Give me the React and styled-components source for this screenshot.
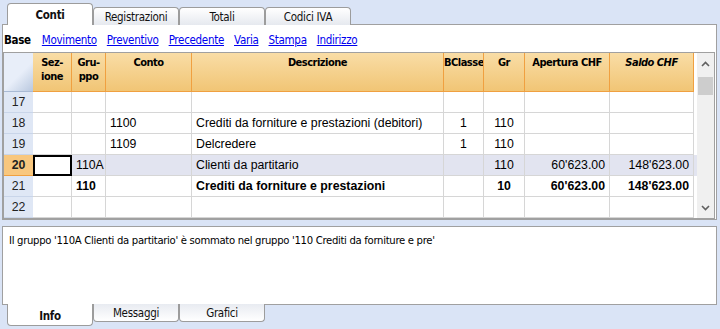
import React from 'react';
import styled, { createGlobalStyle } from 'styled-components';

const GlobalStyle = createGlobalStyle`
  html, body {
    margin: 0;
    padding: 0;
  }
  body {
    width: 720px;
    height: 329px;
    overflow: hidden;
    background: #dae4f6;
    font-family: "DejaVu Sans Condensed", "Liberation Sans", sans-serif;
    font-size: 11px;
    letter-spacing: -0.3px;
    color: #000;
  }
`;

const Window = styled.div`
  display: flex;
  flex-direction: column;
  width: 720px;
  height: 329px;
  & > * {
    flex-shrink: 0;
  }
`;

const TabStrip = styled.div`
  display: flex;
  align-items: ${props => props.bottom ? 'flex-start' : 'flex-end'};
  height: 24px;
  padding-left: 7px;
  position: relative;
  z-index: 2;
`;

const Tab = styled.div`
  box-sizing: border-box;
  width: 86px;
  height: ${props => props.active ? '22px' : '18px'};
  ${props => props.bottom ? 'margin-top: -1px;' : 'margin-bottom: -1px;'}
  border: 1px solid #9c9c9c;
  ${props => props.bottom ? 'border-top: none;' : 'border-bottom: none;'}
  border-radius: ${props => props.bottom ? '0 0 4px 4px' : '4px 4px 0 0'};
  background: ${props => props.active
    ? '#ffffff'
    : props.bottom
      ? 'linear-gradient(#e8ebf1, #ffffff)'
      : 'linear-gradient(#ffffff, #e6e9ef)'};
  display: flex;
  justify-content: center;
  align-items: ${props => props.bottom && props.active ? 'flex-end' : 'center'};
  padding-bottom: ${props => props.bottom && props.active ? '2px' : '0'};
  font-size: 11.5px;
  font-weight: ${props => props.active ? 'bold' : 'normal'};
  color: #111;
`;

const Panel = styled.div`
  box-sizing: border-box;
  margin: 0 3px 0 2px;
  border: 1px solid #a0a0a0;
  background: #ffffff;
  position: relative;
  z-index: 1;
`;

const MainPanel = styled(Panel)`
  height: 196px;
`;

const LinkBar = styled.div`
  display: flex;
  align-items: center;
  height: 27px;
  padding: 2px 0 0 1px;
  box-sizing: border-box;
  font-size: 11.5px;
  gap: 10px;
`;

const ViewLabel = styled.span`
  font-weight: bold;
  margin-right: 1px;
`;

const ViewLink = styled.a`
  color: #0000ee;
  text-decoration: underline;
  cursor: pointer;
`;

const Grid = styled.div`
  display: flex;
  height: 167px;
  box-sizing: border-box;
  border: 1px solid #a0a0a0;
  margin-right: 1px;
  overflow: hidden;
`;

const Table = styled.div`
  width: 693px;
  display: flex;
  flex-direction: column;
`;

const cols = '29px 39px 34px 86px 252px 40px 41px 85px 84px';

const HeaderRow = styled.div`
  display: grid;
  grid-template-columns: ${cols};
  height: 39px;
  flex-shrink: 0;
`;

const Corner = styled.div`
  background: linear-gradient(135deg, #e8eef9 55%, #b9c8df 100%);
  border-bottom: 1px solid #a9bad4;
`;

const HeaderCell = styled.div`
  box-sizing: border-box;
  background: linear-gradient(#f9dda6, #f1c575);
  border-right: 1px solid #f0a040;
  border-bottom: 1px solid #f0a040;
  padding-top: 3px;
  text-align: center;
  white-space: pre-line;
  overflow: hidden;
  font-size: 11px;
  letter-spacing: -0.5px;
  line-height: 14px;
  font-weight: bold;
  font-style: ${props => props.italic ? 'italic' : 'normal'};
`;

const Row = styled.div`
  display: grid;
  grid-template-columns: ${cols};
  height: 21px;
  flex-shrink: 0;
  background: ${props => props.selected ? '#e2e4f0' : '#ffffff'};
  font-family: "Liberation Sans", Arial, sans-serif;
  font-size: 12.3px;
  letter-spacing: 0;
  font-weight: ${props => props.bold ? 'bold' : 'normal'};
`;

const RowNumber = styled.div`
  box-sizing: border-box;
  background: ${props => props.selected ? '#f8c77f' : '#dfe7f5'};
  border-bottom: 1px solid ${props => props.selected ? '#f0a040' : '#c9d5e9'};
  display: flex;
  align-items: center;
  justify-content: center;
  font-weight: ${props => props.selected ? 'bold' : 'normal'};
  color: #222;
`;

const Cell = styled.div`
  box-sizing: border-box;
  border-right: 1px solid #d6d6d6;
  border-bottom: 1px solid #d6d6d6;
  display: flex;
  align-items: center;
  justify-content: ${props => props.align === 'right' ? 'flex-end' : props.align === 'center' ? 'center' : 'flex-start'};
  padding: 0 4px;
  white-space: nowrap;
  overflow: hidden;
  ${props => props.active && `
    outline: 2px solid #000;
    outline-offset: -2px;
    background: #ffffff;
  `}
`;

const ScrollBar = styled.div`
  width: 17px;
  background: #f0f0f0;
  display: flex;
  flex-direction: column;
  align-items: center;
`;

const ScrollButton = styled.div`
  height: 21px;
  width: 100%;
  display: flex;
  align-items: center;
  justify-content: center;
`;

const Thumb = styled.div`
  width: 15px;
  height: 18px;
  margin-top: 3px;
  background: #cdcdcd;
`;

const Spacer = styled.div`
  flex: 1;
`;

const InfoPanel = styled(Panel)`
  margin-top: 6px;
  height: 79px;
  padding: 7px 6px;
  font-size: 11.2px;
`;

const columns = [
  { key: 'sez', title: 'Sez-\nione' },
  { key: 'gruppo', title: 'Gru-\nppo' },
  { key: 'conto', title: 'Conto' },
  { key: 'desc', title: 'Descrizione' },
  { key: 'bclasse', title: 'BClasse', align: 'center' },
  { key: 'gr', title: 'Gr', align: 'center' },
  { key: 'apertura', title: 'Apertura CHF', align: 'right' },
  { key: 'saldo', title: 'Saldo CHF', align: 'right', italic: true },
];

const rows = [
  { n: 17 },
  { n: 18, conto: '1100', desc: 'Crediti da forniture e prestazioni (debitori)', bclasse: '1', gr: '110' },
  { n: 19, conto: '1109', desc: 'Delcredere', bclasse: '1', gr: '110' },
  { n: 20, gruppo: '110A', desc: 'Clienti da partitario', gr: '110', apertura: "60'623.00", saldo: "148'623.00", selected: true },
  { n: 21, gruppo: '110', desc: 'Crediti da forniture e prestazioni', gr: '10', apertura: "60'623.00", saldo: "148'623.00", bold: true },
  { n: 22 },
];

const topTabs = ['Conti', 'Registrazioni', 'Totali', 'Codici IVA'];
const views = ['Movimento', 'Preventivo', 'Precedente', 'Varia', 'Stampa', 'Indirizzo'];
const bottomTabs = ['Info', 'Messaggi', 'Grafici'];

function Chevron({ up }) {
  return (
    <svg width="9" height="6" viewBox="0 0 9 6">
      <polyline
        points={up ? '1,5 4.5,1.5 8,5' : '1,1 4.5,4.5 8,1'}
        fill="none"
        stroke="#606060"
        strokeWidth="1.6"
      />
    </svg>
  );
}

export default function App() {
  return (
    <Window>
      <GlobalStyle />
      <TabStrip>
        {topTabs.map((t, i) => (
          <Tab key={t} active={i === 0}>{t}</Tab>
        ))}
      </TabStrip>
      <MainPanel>
        <LinkBar>
          <ViewLabel>Base</ViewLabel>
          {views.map(v => <ViewLink key={v}>{v}</ViewLink>)}
        </LinkBar>
        <Grid>
          <Table>
            <HeaderRow>
              <Corner />
              {columns.map(c => (
                <HeaderCell key={c.key} italic={c.italic}>{c.title}</HeaderCell>
              ))}
            </HeaderRow>
            {rows.map(r => (
              <Row key={r.n} selected={r.selected} bold={r.bold}>
                <RowNumber selected={r.selected}>{r.n}</RowNumber>
                {columns.map(c => (
                  <Cell
                    key={c.key}
                    align={c.align}
                    active={r.selected && c.key === 'sez'}
                  >
                    {r[c.key]}
                  </Cell>
                ))}
              </Row>
            ))}
          </Table>
          <ScrollBar>
            <ScrollButton><Chevron up /></ScrollButton>
            <Thumb />
            <Spacer />
            <ScrollButton><Chevron /></ScrollButton>
          </ScrollBar>
        </Grid>
      </MainPanel>
      <InfoPanel>
        Il gruppo '110A Clienti da partitario' è sommato nel gruppo '110 Crediti da forniture e pre'
      </InfoPanel>
      <TabStrip bottom>
        {bottomTabs.map((t, i) => (
          <Tab key={t} bottom active={i === 0}>{t}</Tab>
        ))}
      </TabStrip>
    </Window>
  );
}
